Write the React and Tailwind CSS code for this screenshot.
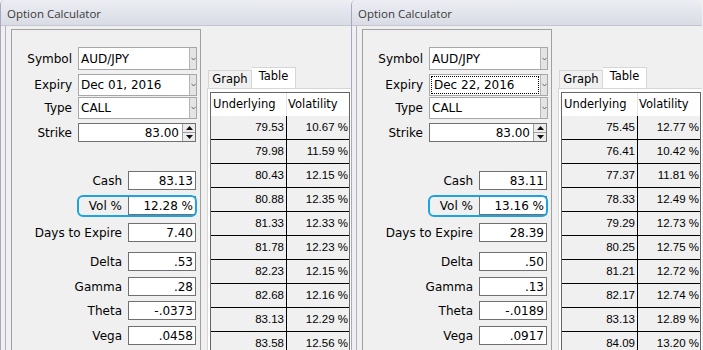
const windows = [
  {
    expiry: "Dec 01, 2016",
    focus: false,
    cash: "83.13",
    vol: "12.28 %",
    days: "7.40",
    delta: ".53",
    gamma: ".28",
    theta: "-.0373",
    vega: ".0458",
    rows: [
      ["79.53", "10.67 %"],
      ["79.98", "11.59 %"],
      ["80.43", "12.15 %"],
      ["80.88", "12.35 %"],
      ["81.33", "12.33 %"],
      ["81.78", "12.23 %"],
      ["82.23", "12.15 %"],
      ["82.68", "12.16 %"],
      ["83.13", "12.29 %"],
      ["83.58", "12.56 %"],
    ],
  },
  {
    expiry: "Dec 22, 2016",
    focus: true,
    cash: "83.11",
    vol: "13.16 %",
    days: "28.39",
    delta: ".50",
    gamma: ".13",
    theta: "-.0189",
    vega: ".0917",
    rows: [
      ["75.45", "12.77 %"],
      ["76.41", "10.42 %"],
      ["77.37", "11.81 %"],
      ["78.33", "12.49 %"],
      ["79.29", "12.73 %"],
      ["80.25", "12.75 %"],
      ["81.21", "12.72 %"],
      ["82.17", "12.74 %"],
      ["83.13", "12.89 %"],
      ["84.09", "13.20 %"],
    ],
  },
];

function Combo({ value, focus, className }) {
  return (
    <div className={"flex shrink-0 items-center " + className}>
      <div className="w-[60px] text-right">{value[0]}</div>
      <div className="ml-[6px] flex h-full w-[119px] border border-[#a7a7a7] bg-white">
        <div className={"flex flex-1 items-center pl-[2px] " + (focus ? "m-[1px] border border-dotted border-black" : "")}>
          {value[1]}
        </div>
        <div className="flex w-[7px] items-center justify-center border-l border-[#b5b5b5] bg-[#e4e4e4]">
          <svg width="5" height="4" viewBox="0 0 5 4">
            <path d="M0.5 0.8 L2.5 3 L4.5 0.8" fill="none" stroke="#606060" strokeWidth="0.9" />
          </svg>
        </div>
      </div>
    </div>
  );
}

function Field({ label, value, className }) {
  return (
    <div className={"flex h-[19px] shrink-0 items-center " + className}>
      <div className="w-[110px] text-right">{label}</div>
      <div className="ml-[6px] flex h-full w-[68px] items-center justify-end border border-[#707070] bg-white pr-[2px]">
        {value}
      </div>
    </div>
  );
}

function Window({ w }) {
  return (
    <div className="flex h-[350px] w-[351px] shrink-0 flex-col overflow-hidden rounded-t-[5px] border-l border-[#a9a7c2] bg-[#f0f0f0]">
      <div className="flex h-[26px] shrink-0 items-center border-b border-[#c3c6d1] bg-gradient-to-b from-[#eceef3] to-[#d9dce5] pl-[6px] pt-[2px] font-['Open_Sans'] text-[11.5px] text-[#3a3a3a]">
        Option Calculator
      </div>
      <div className="flex min-h-0 flex-1 pl-[4px]">
        <div className="flex flex-1 border-l border-[#b1afc9] pl-[5px] pt-[3px] font-['DejaVu_Sans'] text-[12px] text-black">
          <div className="flex w-[190px] flex-col border border-b-0 border-[#a0a0a0] pt-[17px]">
            <Combo value={["Symbol", "AUD/JPY"]} className="h-[23px]" />
            <Combo value={["Expiry", w.expiry]} focus={w.focus} className="mt-[4px] h-[22px]" />
            <Combo value={["Type", "CALL"]} className="mt-[1px] h-[22px]" />
            <div className="mt-[4px] flex h-[19px] shrink-0 items-center">
              <div className="w-[60px] text-right">Strike</div>
              <div className="ml-[6px] flex h-full w-[118px] border border-[#707070] bg-white">
                <div className="flex flex-1 items-center justify-end pr-[3px]">83.00</div>
                <div className="flex w-[13px] flex-col border-l border-[#a0a0a0] bg-[#ececec]">
                  <div className="flex flex-1 items-center justify-center border-b border-[#a0a0a0]">
                    <svg width="7" height="4" viewBox="0 0 7 4"><path d="M3.5 0 L7 4 L0 4 Z" fill="#111" /></svg>
                  </div>
                  <div className="flex flex-1 items-center justify-center">
                    <svg width="7" height="4" viewBox="0 0 7 4"><path d="M0 0 L7 0 L3.5 4 Z" fill="#111" /></svg>
                  </div>
                </div>
              </div>
            </div>
            <Field label="Cash" value={w.cash} className="mt-[29px]" />
            <div className="relative mt-[6px] shrink-0">
              <Field label="Vol %" value={w.vol} />
              <div className="absolute left-[65px] top-[-1px] h-[22px] w-[120px] rounded-[6px] border-2 border-[#1fa3e0]" />
            </div>
            <Field label="Days to Expire" value={w.days} className="mt-[8px]" />
            <Field label="Delta" value={w.delta} className="mt-[10px]" />
            <Field label="Gamma" value={w.gamma} className="mt-[6px]" />
            <Field label="Theta" value={w.theta} className="mt-[5px]" />
            <Field label="Vega" value={w.vega} className="mt-[6px]" />
          </div>
          <div className="flex min-h-0 flex-1 flex-col pl-[6px] pt-[38px]">
            <div className="flex shrink-0 items-end pl-[1px] text-[11.5px]">
              <div className="flex h-[18px] w-[44px] items-center justify-center border border-b-0 border-[#d6d6d6] bg-[#f0f0f0]">Graph</div>
              <div className="flex h-[21px] w-[44px] items-center justify-center border border-b-0 border-l-0 border-[#d6d6d6] bg-white pb-[2px]">Table</div>
            </div>
            <div className="min-h-0 flex-1 overflow-hidden border-l border-t border-[#d6d6d6] bg-white pl-[2px] pt-[3px]">
              <div className="w-[140px] border-l border-r border-t border-[#646464]">
                <div className="flex h-[23px] items-center bg-white text-[11.5px]">
                  <div className="flex h-full w-[76px] items-center border-r border-[#e3e3e3] pl-[2px]">Underlying</div>
                  <div className="pl-[1px]">Volatility</div>
                </div>
                {w.rows.map((r) => (
                  <div key={r[0]} className="flex h-[24px] border-b border-black bg-[#f0f0f0] font-['Liberation_Sans'] text-[11.5px]">
                    <div className="flex w-[76px] items-center justify-end border-r border-black pr-[2px]">{r[0]}</div>
                    <div className="flex flex-1 items-center justify-end pr-[1px]">{r[1]}</div>
                  </div>
                ))}
              </div>
            </div>
          </div>
        </div>
      </div>
    </div>
  );
}

export default function App() {
  return (
    <div className="flex h-[350px] w-[703px] overflow-hidden bg-[#f0f0f0]">
      {windows.map((w) => (
        <Window key={w.expiry} w={w} />
      ))}
    </div>
  );
}
